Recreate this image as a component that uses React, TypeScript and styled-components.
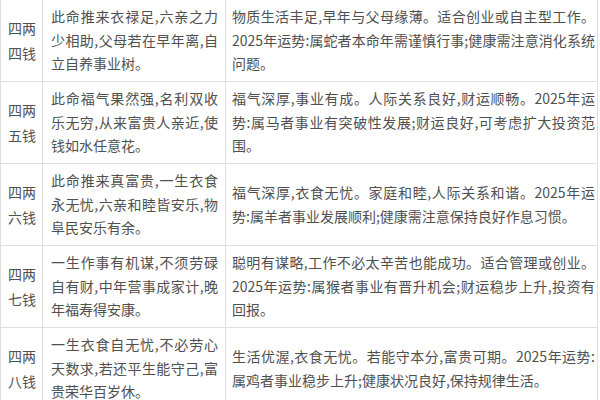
import styled, { createGlobalStyle } from 'styled-components';

const GlobalStyle = createGlobalStyle`
  html, body {
    margin: 0;
    padding: 0;
    background: #fff;
  }
`;

const Page = styled.div`
  width: 600px;
  height: 400px;
  overflow: hidden;
  background: #fff;
  font-family: 'Noto Sans CJK SC', 'Noto Sans', sans-serif;
  font-size: 14px;
  line-height: 23.4px;
  color: #505050;
`;

const Table = styled.table`
  border-collapse: collapse;
  table-layout: fixed;
  width: 597px;
  margin-top: -1px;
`;

const Cell = styled.td`
  border: 1px solid #dfdfdf;
  vertical-align: middle;
  padding: 5.4px 4px 5.4px 7px;
`;

const NameCell = styled(Cell)`
  padding: 5.4px 4px 5.4px 7px;
  line-height: 25px;
`;

const VerseCell = styled(Cell)`
  padding: 5.4px 7px 5.4px 8px;
`;

const ForecastCell = styled(Cell)`
  padding: 5.4px 2px 5.4px 6px;
`;

const Line = styled.span<{ $fill: boolean }>`
  display: block;
  white-space: nowrap;
  text-align: left;
  text-align-last: ${(p) => (p.$fill ? 'justify' : 'left')};
`;

interface Row {
  name: string[];
  verse: string[];
  forecast: string[];
}

const rows: Row[] = [
  {
    name: ['四两', '四钱'],
    verse: ['此命推来衣禄足,六亲之力', '少相助,父母若在早年离,自', '立自养事业树。'],
    forecast: [
      '物质生活丰足,早年与父母缘薄。适合创业或自主型工作。',
      '2025年运势:属蛇者本命年需谨慎行事;健康需注意消化系统',
      '问题。',
    ],
  },
  {
    name: ['四两', '五钱'],
    verse: ['此命福气果然强,名利双收', '乐无穷,从来富贵人亲近,使', '钱如水任意花。'],
    forecast: [
      '福气深厚,事业有成。人际关系良好,财运顺畅。2025年运',
      '势:属马者事业有突破性发展;财运良好,可考虑扩大投资范',
      '围。',
    ],
  },
  {
    name: ['四两', '六钱'],
    verse: ['此命推来真富贵,一生衣食', '永无忧,六亲和睦皆安乐,物', '阜民安乐有余。'],
    forecast: [
      '福气深厚,衣食无忧。家庭和睦,人际关系和谐。2025年运',
      '势:属羊者事业发展顺利;健康需注意保持良好作息习惯。',
    ],
  },
  {
    name: ['四两', '七钱'],
    verse: ['一生作事有机谋,不须劳碌', '自有财,中年营事成家计,晚', '年福寿得安康。'],
    forecast: [
      '聪明有谋略,工作不必太辛苦也能成功。适合管理或创业。',
      '2025年运势:属猴者事业有晋升机会;财运稳步上升,投资有',
      '回报。',
    ],
  },
  {
    name: ['四两', '八钱'],
    verse: ['一生衣食自无忧,不必劳心', '天数求,若还平生能守己,富', '贵荣华百岁休。'],
    forecast: [
      '生活优渥,衣食无忧。若能守本分,富贵可期。2025年运势:',
      '属鸡者事业稳步上升;健康状况良好,保持规律生活。',
    ],
  },
];

function Lines({ lines, fill }: { lines: string[]; fill: boolean }) {
  return (
    <>
      {lines.map((text, i) => (
        <Line key={text} $fill={fill && i < lines.length - 1}>
          {text}
        </Line>
      ))}
    </>
  );
}

function App() {
  return (
    <Page>
      <GlobalStyle />
      <Table>
        <colgroup>
          <col width={42} />
          <col width={183} />
          <col width={372} />
        </colgroup>
        <tbody>
          {rows.map((row) => (
            <tr key={row.name.join('')}>
              <NameCell>
                <Lines lines={row.name} fill={false} />
              </NameCell>
              <VerseCell>
                <Lines lines={row.verse} fill />
              </VerseCell>
              <ForecastCell>
                <Lines lines={row.forecast} fill />
              </ForecastCell>
            </tr>
          ))}
        </tbody>
      </Table>
    </Page>
  );
}

export default App;
